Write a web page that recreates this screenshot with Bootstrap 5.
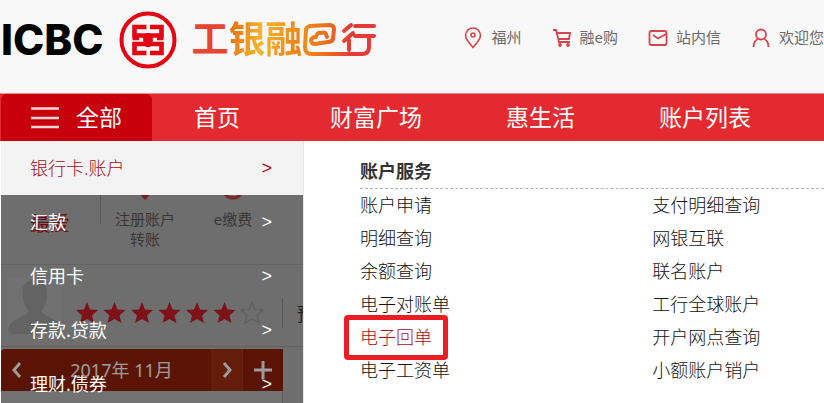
<!DOCTYPE html>
<html lang="zh-CN">
<head>
<meta charset="utf-8">
<meta name="viewport" content="width=device-width, initial-scale=1">
<title>ICBC 工银融e行</title>
<link href="https://cdn.jsdelivr.net/npm/bootstrap@5.3.0/dist/css/bootstrap.min.css" rel="stylesheet">
<style>
  body { font-family: "Noto Sans", "Noto Sans CJK SC", sans-serif; font-size: 18px; color: #333; overflow: hidden; }
  a { color: inherit; text-decoration: none; }
  svg { flex: none; display: block; }
  .site-head { height: 93px; background: #f8f8f8; padding-bottom: 13px; }
  .brand-name { font: 800 42px/48px "Inter", sans-serif; color: #000; padding-left: 1px; }
  .brand-cn { font: 700 37px/48px "Noto Sans CJK SC", sans-serif; color: #e8452f; padding-bottom: 6px; margin-left: 14px; }
  .brand-gold { background: linear-gradient(100deg, #e87511 10%, #f6b52c 45%, #ee8416 90%); -webkit-background-clip: text; background-clip: text; color: transparent; }
  .tool-links { font-size: 15px; gap: 30px; color: #6a6a6a; padding-bottom: 5px; }
  .tool-links a { gap: 8px; }
  .main-nav { background: #e32a30; border-top: 1px solid #e88a8d; height: 48px; font-size: 23px; color: #fff; }
  .main-nav a { padding: 0 42px; }
  .main-nav .home-link { padding-right: 48px; }
  .main-nav .all-btn { width: 151px; margin-left: 1px; padding: 0 0 0 30px; gap: 17px; background: #c7000b; color: #fff; border: 0; border-radius: 6px 6px 0 0; }
  .side { width: 303px; padding-left: 1px; }
  .backdrop-page { height: 100%; background: #a9a9a9; color: #555; font-size: 15px; line-height: 20px; }
  .shortcuts { height: 124px; border-bottom: 1px solid #989898; padding-top: 46px; }
  .fav { width: 100px; border-right: 1px solid #8a8a8a; height: 37px; padding: 27px 0 0 29px; font-size: 20px; color: #b0101c; }
  .shortcut { width: 88px; text-align: center; }
  .level { height: 82px; border-bottom: 1px solid #949494; padding-left: 7px; }
  .level-stars { padding-top: 15px; }
  .level-more { height: 30px; border-left: 1px solid #858585; padding: 6px 0 0 14px; font-size: 18px; color: #333; }
  .cal { width: 282px; height: 42px; margin-top: 2px; background: #8c2005; color: #eee; font-size: 18px; border-radius: 4px 0 0 0; }
  .cal-step { width: 31px; }
  .cal-next { background: #9a2d10; }
  .cal-add { width: 41px; border-left: 1px solid #9a3a20; }
  .cal-days { width: 282px; height: 40px; background: #b0b0b0; border-right: 1px solid #8e8e8e; }
  .side-menu { background: rgba(0, 0, 0, .35); left: 1px; }
  .side-menu a { height: 54px; padding: 0 31px 0 29px; color: #fff; font-weight: 400; }
  .side-menu a.current { background: #f3f3f3; color: #a80c18; font-weight: 300; }
  .arrow { font-family: "Liberation Sans", sans-serif; }
  .panel { padding: 17px 0 0 56px; border-left: 1px solid #e6e6e6; }
  .panel h2 { font-size: 18px; line-height: 26px; font-weight: 700; margin: 0; padding-bottom: 4px; border-bottom: 1px dashed #b4b4b4; }
  .services { display: grid; grid-template-columns: 63fr 37fr; font-weight: 300; color: #111; }
  .services li { height: 33px; line-height: 33px; white-space: nowrap; }
  .picked { position: relative; display: inline-block; color: #a80c18; }
  .picked::after { content: ""; position: absolute; inset: -6px -16px; border: 5px solid #ec1c24; border-radius: 4px; }
</style>
<script src="https://cdn.jsdelivr.net/npm/bootstrap@5.3.0/dist/js/bootstrap.bundle.min.js"></script>
</head>
<body class="d-flex flex-column vh-100">
<header class="site-head d-flex align-items-center flex-shrink-0 text-nowrap">
  <a href="#" class="d-flex align-items-center" aria-label="ICBC 工银融e行">
    <span class="brand-name">ICBC</span>
    <svg class="ms-3" width="58" height="58" viewBox="0 0 58 58">
      <circle cx="29" cy="29" r="26.5" fill="none" stroke="#e30613" stroke-width="4"/>
      <path fill="none" stroke="#e30613" stroke-width="4.600" d="M27.500 16H15.500V24.500H26.500V33H15.500V42H27.500M31 16H42.500V24.500H31.500V33H42.500V42H31M29 22V36M13.500 27H20M44.500 27H38"/>
    </svg>
    <span class="brand-cn">工<span class="brand-gold">银融</span></span>
    <svg width="78" height="36" viewBox="0 0 78 36" fill="none" stroke-width="4" stroke-linecap="round" stroke-linejoin="round">
      <defs><linearGradient id="tail" gradientUnits="userSpaceOnUse" x1="4" y1="0" x2="48" y2="0"><stop stop-color="#ef8a18"/><stop offset=".6" stop-color="#ea6422"/><stop offset="1" stop-color="#e53a38"/></linearGradient></defs>
      <g stroke="url(#tail)">
        <path d="M4 8Q4 5 8 4L27 3Q32 3 32 7L31 17Q30 20 26 20L13 22Q9 22 9 18 10 15 14 15 15 10 19 11 24 9 25 15"/>
        <path d="M4 8L3 25Q3 32 10 32H60Q67 32 67 25V15"/>
        <path d="M49 3L42 9M51 11L42 19M47 18V28M53 4H72M53 14H72"/>
      </g>
    </svg>
  </a>
  <nav class="tool-links d-flex ms-auto" aria-label="工具">
    <a href="#" class="d-flex align-items-center"><svg width="20" height="22" viewBox="0 0 20 22" fill="none" stroke="#d9434c" stroke-width="1.6"><path d="M10 20.5Q2.500 12 2.500 8.500A7.500 7.500 0 0 1 17.500 8.500Q17.500 12 10 20.500Z"/><circle cx="10" cy="8" r="2"/></svg>福州</a>
    <a href="#" class="d-flex align-items-center"><svg width="20" height="20" viewBox="0 0 20 20" fill="none" stroke="#d9434c" stroke-width="1.8"><path d="M1 2H4L7 14H18M5 5H18L17 11H7"/><circle cx="8" cy="17" r="1"/><circle cx="16" cy="17" r="1"/></svg>融e购</a>
    <a href="#" class="d-flex align-items-center"><svg width="20" height="20" viewBox="0 0 20 20" fill="none" stroke="#d9434c" stroke-width="1.8"><path d="M18.500 8V15Q18.500 17 16.500 17H3.500Q1.500 17 1.500 15V5Q1.500 3 3.500 3H16.500Q18.500 3 18.500 5ZM5 7L10 10.500 18 6"/></svg>站内信</a>
    <a href="#" class="d-flex align-items-center"><svg width="20" height="20" viewBox="0 0 20 20" fill="none" stroke="#d9434c" stroke-width="1.8"><circle cx="10" cy="6.500" r="5"/><path d="M7 11Q2.500 13 2.500 19M13 11Q17.500 13 17.500 19"/></svg>欢迎您</a>
  </nav>
</header>
<nav class="main-nav d-flex align-items-stretch flex-shrink-0 text-nowrap" aria-label="主导航">
  <button type="button" class="all-btn d-flex align-items-center"><svg width="28" height="22" viewBox="0 0 28 22" stroke="#fbd5d5" stroke-width="2.500"><path d="M0 1.500H28M0 11H28M0 20H28"/></svg>全部</button>
  <a href="#" class="home-link d-flex align-items-center">首页</a>
  <a href="#" class="d-flex align-items-center">财富广场</a>
  <a href="#" class="d-flex align-items-center">惠生活</a>
  <a href="#" class="d-flex align-items-center">账户列表</a>
</nav>
<main class="d-flex flex-grow-1 overflow-hidden">
  <aside class="side position-relative flex-shrink-0 overflow-hidden">
    <div class="backdrop-page overflow-hidden text-nowrap">
      <div class="shortcuts d-flex">
        <div class="fav">最爱</div>
        <div class="shortcut"><svg class="mx-auto" width="24" height="22" viewBox="0 0 24 22"><path d="M2 2H22L12 13Z" fill="#c22a2a"/></svg>注册账户<br>转账</div>
        <div class="shortcut"><svg class="mx-auto" width="24" height="22" viewBox="0 0 24 22"><circle cx="12" cy="1" r="10" fill="none" stroke="#bd4040" stroke-width="3"/></svg>e缴费</div>
      </div>
      <div class="level d-flex align-items-center">
        <svg width="54" height="56" viewBox="0 0 54 56"><rect width="54" height="56" rx="5" fill="#aeaeae"/><path d="M27 2C16 2 13 10 15 20 16 27 19 30 20 33 19 40 2 39 0 52Q1 56 4 56H50Q54 56 54 52C52 39 35 40 34 33 36 29 39 26 39 18 40 9 37 2 27 2Z" fill="#999"/></svg>
        <div class="level-stars d-flex align-items-center">
          <svg class="ms-2" width="196" height="24" viewBox="-6 0 196 24">
            <defs><path id="star" d="M11 1L14 8.500 22 9 16 14.500 18 22 11 18 4 22 6 14.500 0 9 8 8.500Z"/></defs>
            <g fill="#c01c26"><use href="#star"/><use href="#star" x="27.500"/><use href="#star" x="55"/><use href="#star" x="82.500"/><use href="#star" x="110"/><use href="#star" x="137.500"/></g>
            <use href="#star" x="165" fill="none" stroke="#959595" stroke-width="1.500"/>
          </svg>
          <div class="level-more ms-3">预约</div>
        </div>
      </div>
      <div class="cal d-flex">
        <span class="cal-step d-flex align-items-center justify-content-center"><svg width="12" height="16" viewBox="0 0 12 16" fill="none" stroke="#eee" stroke-width="3"><path d="M9 1L3 8L9 15"/></svg></span>
        <span class="flex-grow-1 d-flex align-items-center justify-content-center">2017年 11月</span>
        <span class="cal-step cal-next d-flex align-items-center justify-content-center"><svg width="12" height="16" viewBox="0 0 12 16" fill="none" stroke="#eee" stroke-width="3"><path d="M3 1L9 8L3 15"/></svg></span>
        <span class="cal-add d-flex align-items-center justify-content-center"><svg width="18" height="18" viewBox="0 0 18 18" stroke="#eee" stroke-width="3"><path d="M9 0V18M0 9H18"/></svg></span>
      </div>
      <div class="cal-days"></div>
    </div>
    <nav class="side-menu position-absolute top-0 end-0 bottom-0" aria-label="全部服务">
      <a href="#" class="current d-flex align-items-center justify-content-between">银行卡.账户<span class="arrow">&gt;</span></a>
      <a href="#" class="d-flex align-items-center justify-content-between">汇款<span class="arrow">&gt;</span></a>
      <a href="#" class="d-flex align-items-center justify-content-between">信用卡<span class="arrow">&gt;</span></a>
      <a href="#" class="d-flex align-items-center justify-content-between">存款.贷款<span class="arrow">&gt;</span></a>
      <a href="#" class="d-flex align-items-center justify-content-between">理财.债券<span class="arrow">&gt;</span></a>
    </nav>
  </aside>
  <section class="panel flex-grow-1 bg-white">
    <h2>账户服务</h2>
    <div class="services">
      <ul class="list-unstyled mb-0">
        <li><a href="#">账户申请</a></li>
        <li><a href="#">明细查询</a></li>
        <li><a href="#">余额查询</a></li>
        <li><a href="#">电子对账单</a></li>
        <li><a href="#" class="picked">电子回单</a></li>
        <li><a href="#">电子工资单</a></li>
      </ul>
      <ul class="list-unstyled mb-0">
        <li><a href="#">支付明细查询</a></li>
        <li><a href="#">网银互联</a></li>
        <li><a href="#">联名账户</a></li>
        <li><a href="#">工行全球账户</a></li>
        <li><a href="#">开户网点查询</a></li>
        <li><a href="#">小额账户销户</a></li>
      </ul>
    </div>
  </section>
</main>
</body>
</html>
